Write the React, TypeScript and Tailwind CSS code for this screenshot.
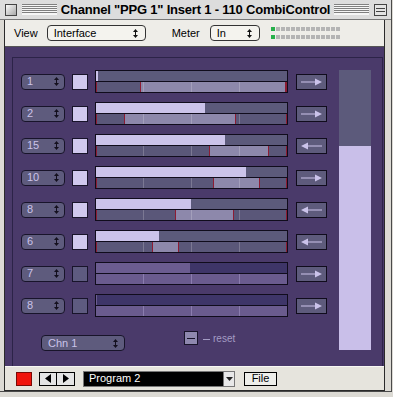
import React from 'react';

interface Row {
  ch: string;
  on: boolean;
  fill: number;
  cuts: number[];
  dir: 'right' | 'left';
}

const rows: Row[] = [
  { ch: '1', on: true, fill: 2, cuts: [44, 191], dir: 'right' },
  { ch: '2', on: true, fill: 109, cuts: [28, 139], dir: 'right' },
  { ch: '15', on: true, fill: 129, cuts: [113, 172], dir: 'left' },
  { ch: '10', on: true, fill: 150, cuts: [117, 163], dir: 'right' },
  { ch: '8', on: true, fill: 95, cuts: [79, 137], dir: 'left' },
  { ch: '6', on: true, fill: 63, cuts: [56, 82], dir: 'left' },
  { ch: '7', on: false, fill: 94, cuts: [], dir: 'right' },
  { ch: '8', on: false, fill: 1, cuts: [], dir: 'right' },
];

const UpDown = ({ color }: { color: string }) => (
  <svg width="5" height="9" viewBox="0 0 5 9" fill={color}>
    <path d="M2.5 0L5 3H0Z" />
    <rect x="2" y="3" width="1" height="3" />
    <path d="M2.5 9L0 6H5Z" />
  </svg>
);

const Arrow = ({ dir }: { dir: 'right' | 'left' }) => (
  <svg width="21" height="8" viewBox="0 0 21 8" className={dir === 'left' ? 'scale-x-[-1]' : ''}>
    <rect x="0" y="3.5" width="15" height="1" fill="#cbc3ea" />
    <path d="M14 0.5L21 4L14 7.5Z" fill="#cbc3ea" />
  </svg>
);

const Ticks = ({ cls }: { cls: string }) => (
  <>
    <div className={`absolute top-0 bottom-0 left-[47px] w-px ${cls}`} />
    <div className={`absolute top-0 bottom-0 left-[95px] w-px ${cls}`} />
    <div className={`absolute top-0 bottom-0 left-[143px] w-px ${cls}`} />
  </>
);

const Bar = ({ row }: { row: Row }) => {
  if (!row.on) {
    return (
      <div className="w-[193px] h-[23px] border border-[#100c1c] flex flex-col">
        <div className="h-[10px] bg-[#3e3568] flex">
          <div className="h-full bg-[#6b5c90]" style={{ width: row.fill }} />
        </div>
        <div className="h-px bg-[#100c1c]" />
        <div className="relative h-[10px] bg-[#6a5b8e]">
          <Ticks cls="bg-[#8a7cae]" />
        </div>
      </div>
    );
  }
  const [a, b] = row.cuts;
  return (
    <div className="w-[193px] h-[23px] border border-[#100c1c] flex flex-col">
      <div className="h-[10px] bg-[#5c5a7b] flex">
        <div className="h-full bg-[#cbc3ea]" style={{ width: row.fill }} />
      </div>
      <div className="h-px bg-[#100c1c]" />
      <div className="relative h-[10px] bg-[#5a5779] flex">
        <div className="w-px h-full bg-[#8c1c34]" />
        <div className="h-full" style={{ width: a - 1 }} />
        <div className="w-px h-full bg-[#8c1c34]" />
        <div className="h-full bg-[#8d88ab]" style={{ width: b - a - 1 }} />
        <div className="w-px h-full bg-[#8c1c34]" />
        <div className="flex-1 h-full" />
        <div className="w-px h-full bg-[#8c1c34]" />
        <Ticks cls="bg-white/20" />
      </div>
    </div>
  );
};

const ChSelect = ({ label }: { label: string }) => (
  <div className="w-[44px] h-[16px] rounded-[4px] border border-[#18142a] bg-[#5e5b7d] flex items-center justify-between pl-[5px] pr-[5px]">
    <span className="text-[11px] leading-none text-[#cbc3ea]">{label}</span>
    <UpDown color="#14101e" />
  </div>
);

const Stripes = () => (
  <div className="flex-1 h-[11px] bg-[repeating-linear-gradient(180deg,#808080_0px,#808080_1px,#f6f6f6_1px,#f6f6f6_2px)] border-b border-[#f6f6f6]" />
);

export default function App() {
  return (
    <div className="w-[393px] h-[397px] bg-[#dcdad4] overflow-hidden" style={{ fontFamily: '"Liberation Sans", Arial, sans-serif' }}>
      <div className="w-[392px] h-[392px] border-r border-b border-[#4a4a4a] flex flex-col">
        {/* title bar */}
        <div className="h-[20px] shrink-0 flex items-center pl-[5px] pr-[4px] bg-[#dddddd] border-b border-[#777]">
          <div className="w-[12px] h-[12px] border border-[#444] bg-gradient-to-br from-[#fbfbfb] to-[#a8a8a8]" />
          <div className="w-[5px]" />
          <Stripes />
          <div className="px-[4px] text-[13px] font-bold tracking-[-0.2px] leading-none text-black whitespace-nowrap">
            Channel "PPG 1" Insert 1 - 110 CombiControl
          </div>
          <Stripes />
          <div className="w-[5px]" />
          <div className="w-[13px] h-[12px] border border-[#444] bg-[#e4e4e4] flex flex-col justify-center gap-[2px] px-[1px]">
            <div className="h-px bg-[#444]" />
            <div className="h-px bg-[#444]" />
          </div>
        </div>

        {/* content */}
        <div className="ml-[4px] w-[381px] h-[371px] border-l border-r border-b border-[#2a2a2a] flex flex-col">
          {/* toolbar */}
          <div className="h-[27px] shrink-0 bg-[#eeede8] border-b border-[#555] flex items-center text-[11px] text-black">
            <span className="ml-[9px]">View</span>
            <div className="ml-[9px] w-[99px] h-[16px] rounded-[4px] border border-[#333] bg-[#f4f3ee] flex items-center justify-between pl-[6px] pr-[7px]">
              <span className="leading-none">Interface</span>
              <UpDown color="#111" />
            </div>
            <span className="ml-[26px]">Meter</span>
            <div className="ml-[10px] w-[50px] h-[16px] rounded-[4px] border border-[#333] bg-[#f4f3ee] flex items-center justify-between pl-[6px] pr-[7px]">
              <span className="leading-none">In</span>
              <UpDown color="#111" />
            </div>
            <div className="ml-[11px] flex flex-col gap-[4px]">
              {[0, 1].map((r) => (
                <div key={r} className="flex gap-px">
                  <div className="w-[4px] h-[4px] bg-[#27b04a]" />
                  {Array.from({ length: 13 }).map((_, i) => (
                    <div key={i} className="w-[4px] h-[4px] bg-[#b4b4b4]" />
                  ))}
                </div>
              ))}
            </div>
          </div>

          {/* purple panel */}
          <div className="h-[319px] shrink-0 bg-[#4a3a6a] pl-[7px] pt-[10px] pr-[1px]">
            <div className="h-full border-l border-t border-r border-[#2c2348] pl-[8px] pt-[12px] pr-[11px] flex">
              <div className="flex flex-col">
                <div className="flex flex-col gap-[9px]">
                  {rows.map((row, i) => (
                    <div key={i} className="h-[23px] flex items-center">
                      <ChSelect label={row.ch} />
                      <div className={`ml-[7px] w-[16px] h-[16px] border border-[#18142a] ${row.on ? 'bg-[#d0c8ee]' : 'bg-[#5e5b80]'}`} />
                      <div className="ml-[7px]">
                        <Bar row={row} />
                      </div>
                      <div className="ml-[8px] w-[31px] h-[16px] border border-[#100c1c] bg-[#5e5b7c] flex items-center justify-center">
                        <Arrow dir={row.dir} />
                      </div>
                    </div>
                  ))}
                </div>
                <div className="mt-[14px] flex items-start">
                  <div className="mt-[4px] ml-[20px] w-[84px] h-[16px] rounded-[4px] border border-[#18142a] bg-[#5e5b7d] flex items-center justify-between pl-[6px] pr-[6px]">
                    <span className="text-[11px] leading-none text-[#cbc3ea]">Chn 1</span>
                    <UpDown color="#14101e" />
                  </div>
                  <div className="ml-[59px] w-[14px] h-[14px] border border-[#18142a] bg-[#8e88ae] flex items-center justify-center">
                    <div className="w-[8px] h-px bg-[#18142a]" />
                  </div>
                  <div className="ml-[5px] mt-[3px] flex items-center gap-[3px] text-[10px] leading-none text-[#a49cc4]">
                    <div className="w-[7px] h-px bg-[#a49cc4]" />
                    <span>reset</span>
                  </div>
                </div>
              </div>
              <div className="ml-[12px] w-[32px] h-[280px] flex flex-col">
                <div className="h-[76px] bg-[#5c5a7b]" />
                <div className="flex-1 bg-[#c9bfe9]" />
              </div>
            </div>
          </div>

          {/* status bar */}
          <div className="flex-1 bg-[#e6e4dd] border-t border-[#f8f8f4] flex items-center text-[11px] text-black">
            <div className="ml-[11px] w-[16px] h-[14px] bg-[#f0140c] border border-[#7a0a06]" />
            <div className="ml-[7px] flex">
              <div className="w-[18px] h-[14px] border border-black bg-[#e4e4e4] flex items-center justify-center">
                <svg width="6" height="9" viewBox="0 0 6 9"><path d="M6 0V9L0 4.5Z" fill="#000" /></svg>
              </div>
              <div className="w-[18px] h-[14px] border border-l-0 border-black bg-[#e4e4e4] flex items-center justify-center">
                <svg width="6" height="9" viewBox="0 0 6 9"><path d="M0 0V9L6 4.5Z" fill="#000" /></svg>
              </div>
            </div>
            <div className="ml-[8px] w-[141px] h-[16px] bg-black border border-[#777] flex items-center pl-[5px] text-white">
              <span className="leading-none">Program 2</span>
            </div>
            <div className="w-[11px] h-[16px] border border-[#777] border-l-0 bg-[#e8e8e8] flex items-center justify-center">
              <svg width="7" height="4" viewBox="0 0 7 4"><path d="M0 0H7L3.5 4Z" fill="#222" /></svg>
            </div>
            <div className="ml-[9px] w-[33px] h-[14px] border border-black bg-[#eeeeea] flex items-center justify-center">
              <span className="leading-none">File</span>
            </div>
          </div>
        </div>
      </div>
    </div>
  );
}
